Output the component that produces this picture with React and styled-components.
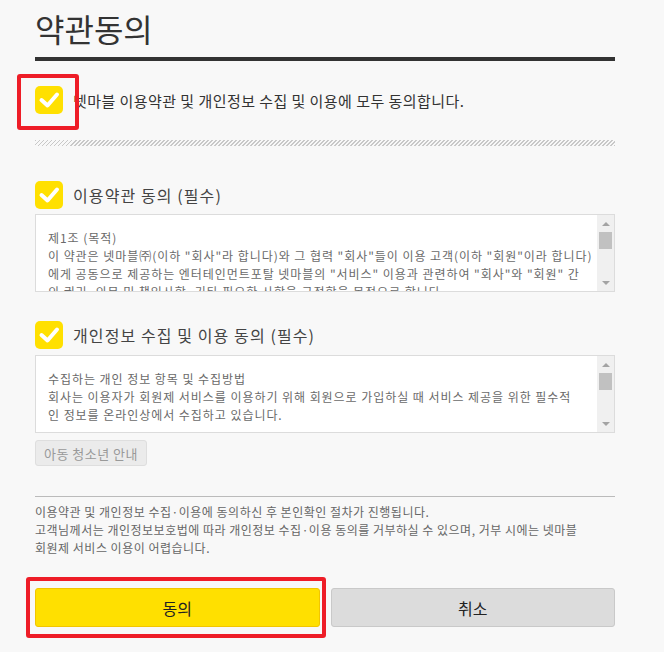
import React from 'react';
import styled, { createGlobalStyle } from 'styled-components';

const GlobalStyle = createGlobalStyle`
  html, body {
    margin: 0;
    padding: 0;
    background: #f8f8f8;
  }
  body {
    font-family: "Noto Sans CJK KR", "Noto Sans", sans-serif;
    color: #333;
  }
`;

const Page = styled.div`
  width: 580px;
  padding: 0 49px 20px 35px;
`;

const Title = styled.h1`
  margin: 0;
  padding: 8px 0 9px;
  font-size: 32px;
  line-height: 40px;
  font-weight: normal;
  color: #333;
  border-bottom: 4px solid #333;
`;

const CheckRow = styled.label`
  display: flex;
  align-items: center;
  gap: 10px;
  margin-top: ${p => p.$top}px;
`;

const Box = styled.span`
  position: relative;
  flex: none;
  width: 28px;
  height: 28px;
  border-radius: 5px;
  background: #ffe000;
  display: flex;
  align-items: center;
  justify-content: center;
`;

const Highlight = styled.span`
  position: absolute;
  top: ${p => p.$t}px;
  left: ${p => p.$l}px;
  right: ${p => p.$r}px;
  bottom: ${p => p.$b}px;
  border: 4px solid #ee1d27;
  border-radius: 3px;
  pointer-events: none;
`;

const AllLabel = styled.span`
  font-size: 15px;
  color: #333;
  letter-spacing: 0.45px;
`;

const SectionLabel = styled.span`
  font-size: 16px;
  color: #444;
  letter-spacing: 1.1px;
`;

const Hatch = styled.div`
  margin-top: 26px;
  height: 6px;
  background: repeating-linear-gradient(135deg, #c8c8c8 0 1.4px, transparent 1.4px 2.83px);
`;

const TermsBox = styled.div`
  margin-top: ${p => p.$top}px;
  height: 76px;
  display: flex;
  border: 1px solid #dcdcdc;
  background: #fff;
`;

const TermsText = styled.div`
  flex: 1;
  overflow: hidden;
  padding: 14px 0 0 12px;
  font-size: 12px;
  line-height: 18px;
  color: #6a6a6a;
  letter-spacing: 0.95px;
`;

const Line = styled.div`
  white-space: nowrap;
`;

const Track = styled.div`
  width: 17px;
  flex: none;
  background: #f0f0f0;
  display: flex;
  flex-direction: column;
  align-items: center;
`;

const Arrow = styled.div`
  height: 17px;
  width: 17px;
  display: flex;
  align-items: center;
  justify-content: center;
  margin-top: ${p => (p.$down ? 'auto' : '0')};
  &::before {
    content: '';
    border-left: 4px solid transparent;
    border-right: 4px solid transparent;
    ${p => (p.$down ? 'border-top: 4px solid #a3a3a3;' : 'border-bottom: 4px solid #a3a3a3;')}
  }
`;

const Thumb = styled.div`
  width: 13px;
  height: 17px;
  background: #c1c1c1;
`;

const GuideButton = styled.button`
  margin-top: 7px;
  height: 26px;
  width: 112px;
  padding: 0;
  border: 1px solid #dedede;
  border-radius: 3px;
  background: #ebebeb;
  color: #999;
  font-family: inherit;
  font-size: 13px;
  letter-spacing: 0.5px;
  display: block;
`;

const Divider = styled.hr`
  margin: 30px 0 0;
  border: 0;
  border-top: 1px solid #bbb;
`;

const Notice = styled.div`
  margin-top: 6px;
  font-size: 12px;
  line-height: 18px;
  color: #666;
  letter-spacing: 0.5px;
`;

const Buttons = styled.div`
  display: grid;
  grid-template-columns: 1fr 1fr;
  align-items: start;
  gap: 11px;
  margin-top: 31px;
`;

const ButtonWrap = styled.div`
  position: relative;
  display: flex;
`;

const ActionButton = styled.button`
  display: block;
  width: 100%;
  height: 39px;
  border-radius: 3px;
  border: 1px solid ${p => (p.$primary ? '#f2c500' : '#c9c9c9')};
  background: ${p => (p.$primary ? '#ffe000' : '#dcdcdc')};
  color: #222;
  font-family: inherit;
  font-size: 16px;
`;

const CheckIcon = () => (
  <svg width="28" height="28" viewBox="0 0 28 28">
    <path d="M6.5 14 L12.5 19.5 L22 8.5" fill="none" stroke="#fff" strokeWidth="4" strokeLinecap="round" strokeLinejoin="round" />
  </svg>
);

const Scrollbar = () => (
  <Track>
    <Arrow />
    <Thumb />
    <Arrow $down />
  </Track>
);

const terms = [
  '제1조 (목적)',
  '이 약관은 넷마블㈜(이하 "회사"라 합니다)와 그 협력 "회사"들이 이용 고객(이하 "회원"이라 합니다)',
  '에게 공동으로 제공하는 엔터테인먼트포탈 넷마블의 "서비스" 이용과 관련하여 "회사"와 "회원" 간',
  '의 권리, 의무 및 책임사항, 기타 필요한 사항을 규정함을 목적으로 합니다.',
];

const privacy = [
  '수집하는 개인 정보 항목 및 수집방법',
  '회사는 이용자가 회원제 서비스를 이용하기 위해 회원으로 가입하실 때 서비스 제공을 위한 필수적',
  '인 정보를 온라인상에서 수집하고 있습니다.',
];

const notice = [
  '이용약관 및 개인정보 수집·이용에 동의하신 후 본인확인 절차가 진행됩니다.',
  '고객님께서는 개인정보보호법에 따라 개인정보 수집·이용 동의를 거부하실 수 있으며, 거부 시에는 넷마블',
  '회원제 서비스 이용이 어렵습니다.',
];

export default function App() {
  return (
    <Page>
      <GlobalStyle />
      <Title>약관동의</Title>

      <CheckRow $top={25}>
        <Box>
          <CheckIcon />
          <Highlight $t={-12} $l={-18} $r={-16} $b={-16} />
        </Box>
        <AllLabel>넷마블 이용약관 및 개인정보 수집 및 이용에 모두 동의합니다.</AllLabel>
      </CheckRow>

      <Hatch />

      <CheckRow $top={35}>
        <Box><CheckIcon /></Box>
        <SectionLabel>이용약관 동의 (필수)</SectionLabel>
      </CheckRow>
      <TermsBox $top={5}>
        <TermsText>
          {terms.map((t, i) => <Line key={i}>{t}</Line>)}
        </TermsText>
        <Scrollbar />
      </TermsBox>

      <CheckRow $top={29}>
        <Box><CheckIcon /></Box>
        <SectionLabel>개인정보 수집 및 이용 동의 (필수)</SectionLabel>
      </CheckRow>
      <TermsBox $top={6}>
        <TermsText>
          {privacy.map((t, i) => <Line key={i}>{t}</Line>)}
        </TermsText>
        <Scrollbar />
      </TermsBox>

      <GuideButton>아동 청소년 안내</GuideButton>

      <Divider />

      <Notice>
        {notice.map((t, i) => <Line key={i}>{t}</Line>)}
      </Notice>

      <Buttons>
        <ButtonWrap>
          <ActionButton $primary>동의</ActionButton>
          <Highlight $t={-11} $l={-9} $r={-6} $b={-11} />
        </ButtonWrap>
        <ActionButton>취소</ActionButton>
      </Buttons>
    </Page>
  );
}
